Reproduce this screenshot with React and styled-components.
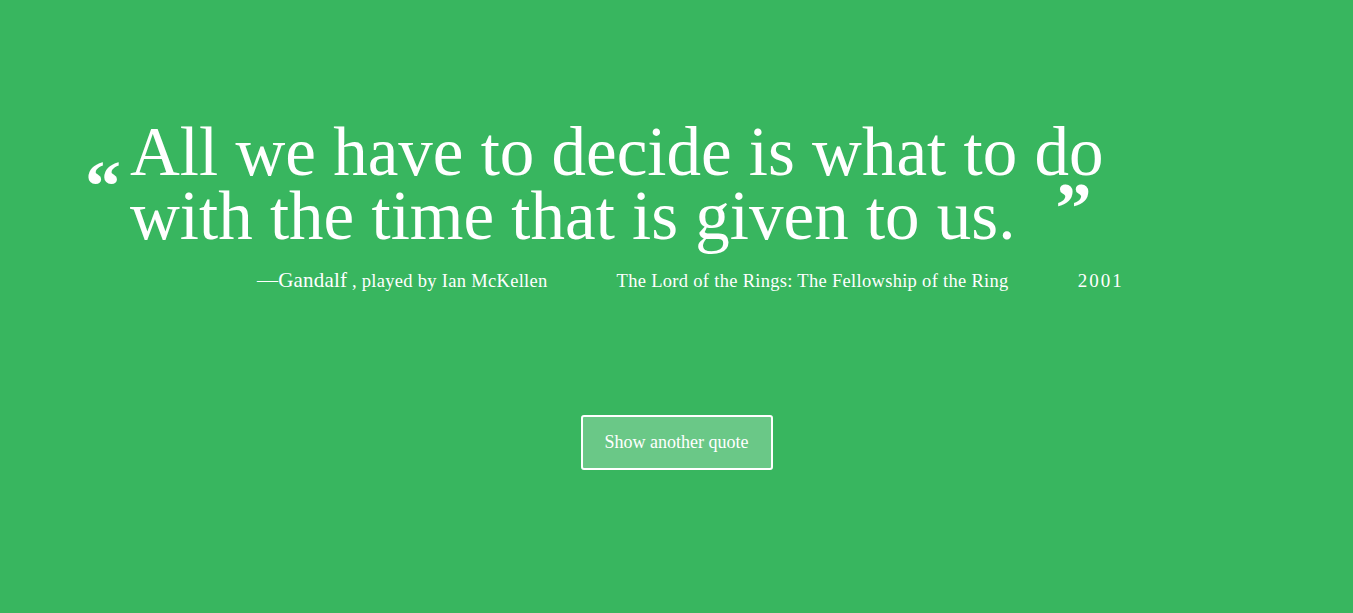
import React from 'react';
import styled, { createGlobalStyle } from 'styled-components';

const GlobalStyle = createGlobalStyle`
  html, body {
    margin: 0;
    padding: 0;
    background: #38b65f;
  }
  body {
    font-family: 'Liberation Serif', 'Times New Roman', serif;
  }
`;

const Page = styled.main`
  min-height: 613px;
  background: #38b65f;
  color: #fff;
  display: flex;
  flex-direction: column;
  align-items: stretch;
  box-sizing: border-box;
  padding-top: 120px;
`;

const Quote = styled.blockquote`
  position: relative;
  margin: 0 0 0 130px;
  width: 1000px;
  font-size: 69px;
  line-height: 64px;
  font-weight: 400;
`;

const OpenMark = styled.span`
  position: absolute;
  left: -45px;
  top: 30px;
  font-size: 72px;
  font-weight: 700;
  line-height: 1;
`;

const CloseMark = styled.span`
  position: relative;
  top: -7px;
  margin-left: 40px;
  font-size: 72px;
  font-weight: 700;
  line-height: 0;
`;

const Attribution = styled.div`
  display: flex;
  align-items: baseline;
  gap: 69px;
  margin: 20px 0 0 257px;
  font-size: 18.5px;
`;

const Speaker = styled.span`
  font-size: 21px;
  letter-spacing: 0.2px;
`;

const Played = styled.span`
  letter-spacing: 0.3px;
`;

const Cite = styled.span`
  font-style: normal;
  letter-spacing: 0.3px;
`;

const Year = styled.span`
  font-size: 19px;
  letter-spacing: 2px;
`;

const ButtonRow = styled.div`
  display: flex;
  justify-content: center;
  margin-top: 122px;
`;

const Button = styled.button`
  width: 192px;
  height: 55px;
  border: 2px solid #fff;
  border-radius: 3px;
  background: rgba(255, 255, 255, 0.25);
  color: #fff;
  font-family: 'Liberation Serif', 'Times New Roman', serif;
  font-size: 18px;
  cursor: pointer;
`;

const App = () => {
  return (
    <>
      <GlobalStyle />
      <Page>
        <Quote>
          <OpenMark>“</OpenMark>
          All we have to decide is what to do with the time that is given to us.
          <CloseMark>”</CloseMark>
        </Quote>
        <Attribution>
          <span>
            <Speaker>—Gandalf</Speaker> <Played>, played by Ian McKellen</Played>
          </span>
          <Cite>The Lord of the Rings: The Fellowship of the Ring</Cite>
          <Year>2001</Year>
        </Attribution>
        <ButtonRow>
          <Button>Show another quote</Button>
        </ButtonRow>
      </Page>
    </>
  );
};

export default App;
